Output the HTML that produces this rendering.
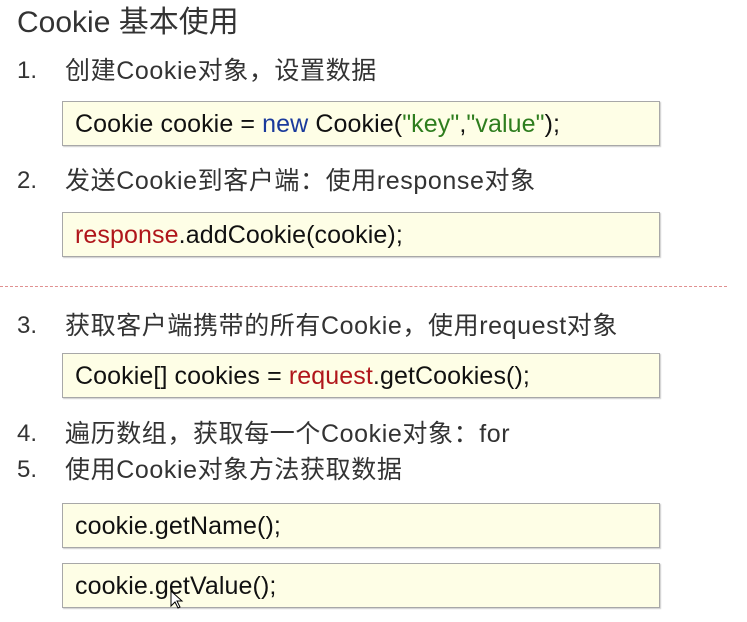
<!DOCTYPE html>
<html><head><meta charset="utf-8"><style>
body{margin:0;width:747px;height:622px;background:#fff;position:relative;overflow:hidden;font-family:"Liberation Sans","Noto Sans CJK SC",sans-serif;color:#222}
.t{position:absolute;white-space:nowrap}
.title{left:17px;top:6px;font-size:30px;line-height:34px;color:#333}
.li{font-size:25px;line-height:30px;color:#333;letter-spacing:0.6px}
.n{left:17px;font-size:24px;letter-spacing:0}
.x{left:65px}
.box{position:absolute;left:62px;width:596px;height:43px;background:#fefee6;border:1px solid #a8a8a8;box-shadow:1px 1px 1px #ccc}
.box span.c{position:absolute;left:12px;top:8px;font-size:25px;line-height:28px;color:#111;white-space:nowrap;letter-spacing:0.1px}
.b{color:#1a3a9c}.g{color:#2e7d1e}.r{color:#b0161b}
.dash{position:absolute;left:0;top:286px;width:727px;border-top:1px dashed #e09090}
</style></head><body>
<div class="t title">Cookie 基本使用</div>
<div class="t li n" style="top:56px">1.</div><div class="t li x" style="top:56px">创建Cookie对象，设置数据</div>
<div class="box" style="top:101px"><span class="c">Cookie cookie = <span class="b">new</span> Cookie(<span class="g">"key"</span>,<span class="g">"value"</span>);</span></div>
<div class="t li n" style="top:166px">2.</div><div class="t li x" style="top:166px">发送Cookie到客户端：使用response对象</div>
<div class="box" style="top:212px"><span class="c"><span class="r">response</span>.addCookie(cookie);</span></div>
<div class="dash"></div>
<div class="t li n" style="top:311px">3.</div><div class="t li x" style="top:311px">获取客户端携带的所有Cookie，使用request对象</div>
<div class="box" style="top:353px"><span class="c">Cookie[] cookies = <span class="r">request</span>.getCookies();</span></div>
<div class="t li n" style="top:419px">4.</div><div class="t li x" style="top:419px">遍历数组，获取每一个Cookie对象：for</div>
<div class="t li n" style="top:455px">5.</div><div class="t li x" style="top:455px">使用Cookie对象方法获取数据</div>
<div class="box" style="top:503px"><span class="c">cookie.getName();</span></div>
<div class="box" style="top:563px"><span class="c">cookie.getValue();</span></div>
<svg style="position:absolute;left:170px;top:590px" width="14" height="20" viewBox="0 0 14 20"><path d="M1 1 L1 16 L5 12 L8 18 L10 17 L7 11 L12 11 Z" fill="#fff" stroke="#000" stroke-width="1"/></svg>
</body></html>
